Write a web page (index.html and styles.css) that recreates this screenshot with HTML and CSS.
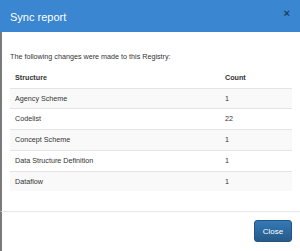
FILE: index.html
```
<!DOCTYPE html>
<html lang="en">

<head>
    <meta charset="UTF-8">
    <title>Sync report</title>
    <link rel="stylesheet" href="styles.css">
</head>

<body>
    <div class="modal">
        <div class="modal-header">
            <h4 class="modal-title">Sync report</h4>
            <button class="close-x">&times;</button>
        </div>
        <div class="modal-body">
            <p>The following changes were made to this Registry:</p>
            <table class="report">
                <thead>
                    <tr>
                        <th>Structure</th>
                        <th class="count">Count</th>
                    </tr>
                </thead>
                <tbody>
                    <tr><td>Agency Scheme</td><td class="count">1</td></tr>
                    <tr><td>Codelist</td><td class="count">22</td></tr>
                    <tr><td>Concept Scheme</td><td class="count">1</td></tr>
                    <tr><td>Data Structure Definition</td><td class="count">1</td></tr>
                    <tr><td>Dataflow</td><td class="count">1</td></tr>
                </tbody>
            </table>
        </div>
        <div class="modal-footer">
            <button class="btn-close">Close</button>
        </div>
    </div>
</body>

</html>
```

FILE: styles.css
```
* {
    box-sizing: border-box;
}

body {
    margin: 0;
    font-family: "Liberation Sans", Arial, sans-serif;
    color: #333;
    background-color: #fff;
}

.modal {
    width: 300px;
    height: 251px;
    display: flex;
    flex-direction: column;
}

/* Header */
.modal-header {
    height: 32px;
    background-color: #3b86d1;
    display: flex;
    align-items: center;
    justify-content: space-between;
    padding: 1px 10px 0 10px;
}

.modal-title {
    margin: 0;
    font-size: 11px;
    font-weight: normal;
    color: #fff;
}

.close-x {
    border: 0;
    background: none;
    padding: 0;
    margin-top: -6px;
    font-size: 11px;
    font-weight: bold;
    line-height: 1;
    color: #000;
    opacity: 0.55;
    font-family: "Liberation Sans", Arial, sans-serif;
}

/* Body */
.modal-body {
    padding: 20px 8px 20px 10px;
    border-left: 2px solid #7a7a7a;
}

.modal-body p {
    margin: 0 0 6px -2px;
    font-size: 7.2px;
    line-height: 10px;
}

.report {
    width: 282px;
    margin-left: -2px;
    border-collapse: collapse;
    font-size: 7.2px;
}

.report th,
.report td {
    text-align: left;
    padding: 5px 5px;
    line-height: 9.7px;
    border-top: 1px solid #e4e4e4;
}

.report th {
    border-top: 0;
    font-weight: bold;
}

.report tbody tr:nth-child(odd) {
    background-color: #f9f9f9;
}

.report .count {
    width: 72px;
}

/* Footer */
.modal-footer {
    flex: 1;
    border-top: 1px solid #e8e8e8;
    border-left: 2px solid #7a7a7a;
    display: flex;
    justify-content: flex-end;
    align-items: flex-start;
    padding: 8px 8px 0 0;
}

.btn-close {
    width: 38px;
    height: 22px;
    border: 1px solid #245580;
    border-radius: 3px;
    background-image: linear-gradient(#337ab7, #265a88);
    color: #fff;
    font-size: 8px;
    font-family: "Liberation Sans", Arial, sans-serif;
    padding: 0;
}
```
